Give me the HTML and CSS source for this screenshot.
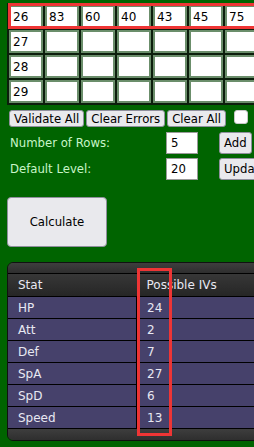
FILE: index.html
```html
<!DOCTYPE html>
<html lang="en">
<head>
  <meta charset="UTF-8" />
  <title>IV Calculator</title>
  <meta name="viewport" content="width=device-width, initial-scale=1.0" />
  <link rel="stylesheet" href="styles.css">
</head>
<body>

<div class="page">
  <div class="grid-wrap">
    <table class="grid">
      <tr>
        <td><input type="text" value="26" /></td>
        <td><input type="text" value="83" /></td>
        <td><input type="text" value="60" /></td>
        <td><input type="text" value="40" /></td>
        <td><input type="text" value="43" /></td>
        <td><input type="text" value="45" /></td>
        <td><input type="text" value="75" /></td>
        <td><input type="text" value="" /></td>
      </tr>
      <tr>
        <td><input type="text" value="27" /></td>
        <td><input type="text" /></td><td><input type="text" /></td><td><input type="text" /></td>
        <td><input type="text" /></td><td><input type="text" /></td><td><input type="text" /></td><td><input type="text" /></td>
      </tr>
      <tr>
        <td><input type="text" value="28" /></td>
        <td><input type="text" /></td><td><input type="text" /></td><td><input type="text" /></td>
        <td><input type="text" /></td><td><input type="text" /></td><td><input type="text" /></td><td><input type="text" /></td>
      </tr>
      <tr>
        <td><input type="text" value="29" /></td>
        <td><input type="text" /></td><td><input type="text" /></td><td><input type="text" /></td>
        <td><input type="text" /></td><td><input type="text" /></td><td><input type="text" /></td><td><input type="text" /></td>
      </tr>
    </table>
    <div class="mark row-mark"></div>
  </div>

  <div class="actions">
    <button>Validate All</button>
    <button>Clear Errors</button>
    <button>Clear All</button>
    <input type="checkbox" class="check" />
  </div>

  <div class="settings">
    <label>Number of Rows:</label>
    <input type="text" value="5" />
    <button>Add</button>
    <label>Default Level:</label>
    <input type="text" value="20" />
    <button>Update</button>
  </div>

  <button class="calc">Calculate</button>

  <div class="results">
    <div class="cap"></div>
    <table>
      <thead>
        <tr><th>Stat</th><th>Possible IVs</th></tr>
      </thead>
      <tbody>
        <tr><td>HP</td><td>24</td></tr>
        <tr><td>Att</td><td>2</td></tr>
        <tr><td>Def</td><td>7</td></tr>
        <tr><td>SpA</td><td>27</td></tr>
        <tr><td>SpD</td><td>6</td></tr>
        <tr><td>Speed</td><td>13</td></tr>
      </tbody>
    </table>
    <div class="cap foot"></div>
    <div class="mark col-mark"></div>
  </div>
</div>

</body>
</html>
```

FILE: styles.css
```css
html, body {
  margin: 0;
  overflow: hidden;
}

body {
  background: #006400;
  font-family: "DejaVu Sans", Verdana, sans-serif;
  font-size: 11.7px;
  color: #c8f5c8;
}

.page {
  width: 420px;
  padding: 3px 0 0 7px;
}

/* red annotation boxes */
.mark {
  position: absolute;
  box-sizing: border-box;
  border: 3px solid #ee3535;
}

.grid-wrap {
  position: relative;
}

.row-mark {
  left: 1px;
  top: 0;
  width: 300px;
  height: 26px;
}

.grid {
  border-collapse: collapse;
  border: 2px solid #0c1e0c;
}

.grid td {
  border: 2px solid #0c1e0c;
  padding: 0;
}

.grid input {
  display: block;
  box-sizing: border-box;
  width: 34px;
  height: 23px;
  margin: 0;
  padding: 0 0 0 2px;
  border: 2px solid #6b8e6b;
  background: #fff;
  color: #000;
  font: 12px "DejaVu Sans", Verdana, sans-serif;
}

button {
  box-sizing: border-box;
  margin: 0;
  padding: 0 4px;
  border: 1px solid #8f8f9d;
  border-radius: 3px;
  background: #e9e9ed;
  color: #000;
  font: 11.7px "DejaVu Sans", Verdana, sans-serif;
  white-space: nowrap;
}

.actions {
  display: flex;
  gap: 2px;
  align-items: flex-start;
  margin: 5px 0 0 2px;
}

.actions button {
  height: 17px;
}

.check {
  appearance: none;
  width: 14px;
  height: 14px;
  margin: 0 0 0 6px;
  background: #fff;
  border: 1px solid #c8c8c8;
  border-radius: 3px;
}

.settings {
  display: grid;
  grid-template-columns: 156px 53px auto;
  row-gap: 4px;
  align-items: center;
  justify-items: start;
  margin: 5px 0 0 3px;
}

.settings input {
  box-sizing: border-box;
  width: 32px;
  height: 22px;
  margin: 0;
  padding: 0 4px;
  border: 1px solid #9a9a9a;
  background: #fff;
  color: #000;
  font: 11.7px "DejaVu Sans", Verdana, sans-serif;
}

.settings button {
  height: 22px;
  padding: 0 4px;
}

.calc {
  display: block;
  width: 100px;
  height: 50px;
  margin-top: 17px;
  border-radius: 4px;
}

.results {
  position: relative;
  width: 330px;
  margin-top: 15px;
  border: 1px solid #111;
  border-radius: 6px;
  overflow: hidden;
  color: #e8e8f2;
  font-size: 12px;
}

.cap {
  height: 10px;
  border-bottom: 1px solid #000;
  background: linear-gradient(#3e3e3e, #2e2e2e);
}

.cap.foot {
  height: 11px;
  border-bottom: none;
}

.results table {
  width: 100%;
  border-collapse: collapse;
}

.results th {
  height: 22px;
  padding: 0 10px;
  text-align: left;
  font-weight: normal;
  border-bottom: 1px solid #000;
  background: linear-gradient(#373737, #262626);
}

.results td {
  height: 21px;
  padding: 0 10px;
  border-bottom: 1px solid #000;
  background: #46416b;
}

.results th:first-child,
.results td:first-child {
  width: 108px;
}

.results td:first-child {
  border-right: 1px solid #000;
}

.col-mark {
  left: 129px;
  top: 5px;
  width: 35px;
  height: 168px;
}
```
